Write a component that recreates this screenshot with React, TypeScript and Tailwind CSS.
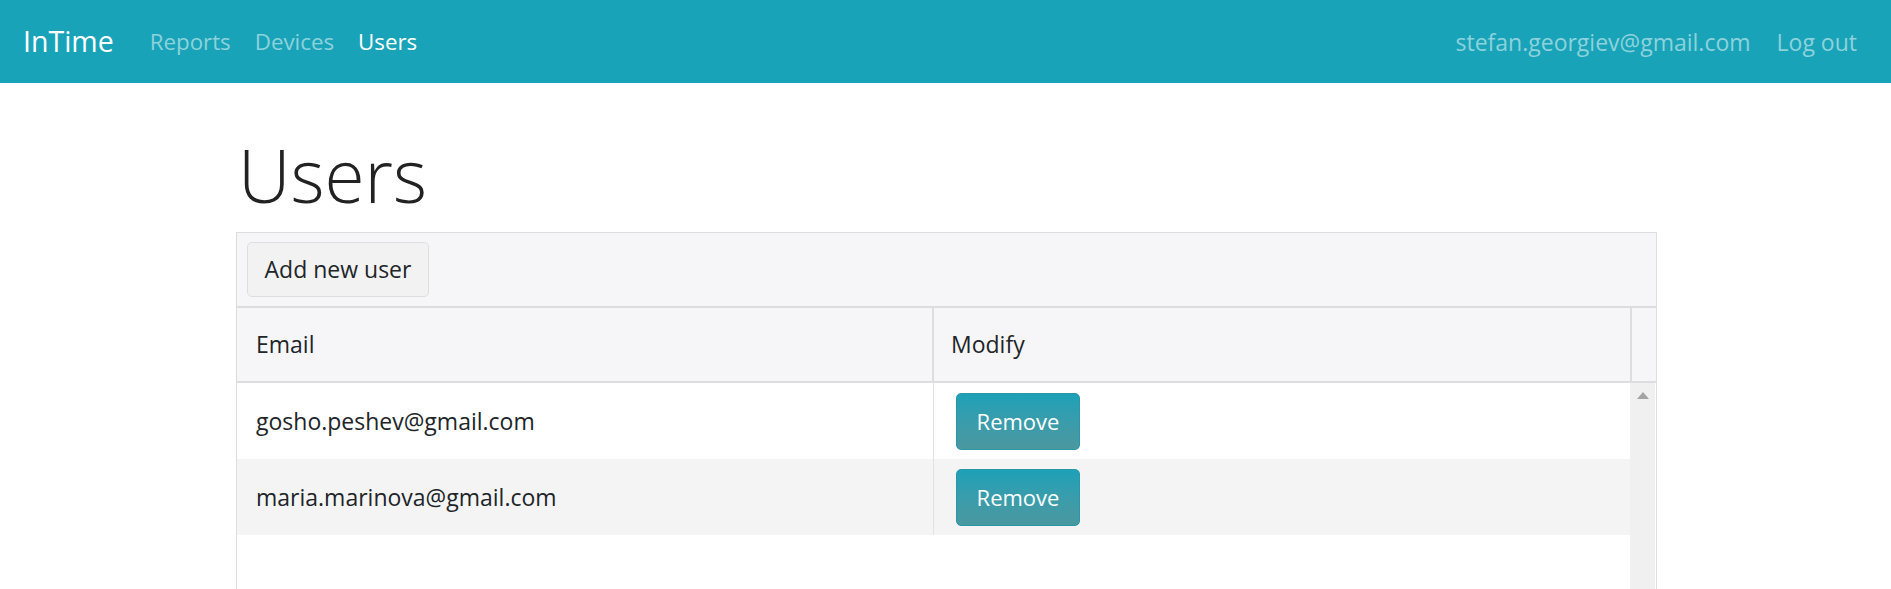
import React from "react";

const font = { fontFamily: '"Open Sans", "Noto Sans", sans-serif' };

function Remove() {
  return (
    <button className="w-[124px] h-[57px] rounded-[5px] bg-gradient-to-b from-[#1ba1b7] to-[#4a98a0] text-white text-[22px] border border-[#2a96a6]">
      Remove
    </button>
  );
}

export default function App() {
  const users = ["gosho.peshev@gmail.com", "maria.marinova@gmail.com"];
  return (
    <div className="w-[1891px] h-[589px] overflow-hidden bg-white text-[#212529]" style={font}>
      <nav className="h-[83px] bg-[#19a3b8] flex items-center pl-[23px] pr-[34px]">
        <span className="text-white text-[28.5px] mr-[36px] leading-none">InTime</span>
        <div className="flex gap-[24px] text-[22.3px] leading-none pt-[2px]">
          <span className="text-[#8dd2dc]">Reports</span>
          <span className="text-[#8dd2dc]">Devices</span>
          <span className="text-white">Users</span>
        </div>
        <div className="ml-auto flex gap-[26px] text-[23px] leading-none pt-[2px]">
          <span className="text-[#8dd2dc]">stefan.georgiev@gmail.com</span>
          <span className="text-[#8dd2dc]">Log out</span>
        </div>
      </nav>
      <div className="pl-[236px] w-[1657px]">
        <h1 className="text-[73px] font-light leading-[90px] mt-[47px] mb-[12px] pl-[2px] text-[#222]">Users</h1>
        <div className="border border-[#dcdce1] h-[400px]">
          <div className="bg-[#f6f6f8] h-[75px] border-b-2 border-[#dcdce1] flex items-center px-[10px]">
            <button className="h-[55px] w-[182px] rounded-[5px] border border-[#dedee2] bg-[#f2f2f3] text-[23px] text-[#212529]">
              Add new user
            </button>
          </div>
          <div className="flex bg-[#f6f6f8] h-[75px] border-b-2 border-[#dcdce1] text-[23px]">
            <div className="w-[697px] border-r-2 border-[#dcdce1] flex items-center pl-[19px]">Email</div>
            <div className="w-[696px] flex items-center pl-[17px]">Modify</div>
            <div className="w-[25px] border-l-2 border-[#dcdce1]"></div>
          </div>
          <div className="flex">
            <div className="w-[1393px]">
              {users.map((u, i) => (
                <div key={u} className={`flex h-[76px] text-[23px] ${i === 1 ? "bg-[#f4f4f4]" : "bg-white"}`}>
                  <div className="w-[697px] border-r border-[#e2e2e4] flex items-center pl-[19px]">{u}</div>
                  <div className="flex items-center pl-[22px]">
                    <Remove />
                  </div>
                </div>
              ))}
            </div>
            <div className="w-[25px] h-[300px] bg-[#f0f0f0] flex justify-center pt-[9px]">
              <svg width="12" height="7" viewBox="0 0 12 7">
                <polygon points="6,0 12,7 0,7" fill="#a3a3a3" />
              </svg>
            </div>
          </div>
        </div>
      </div>
    </div>
  );
}
